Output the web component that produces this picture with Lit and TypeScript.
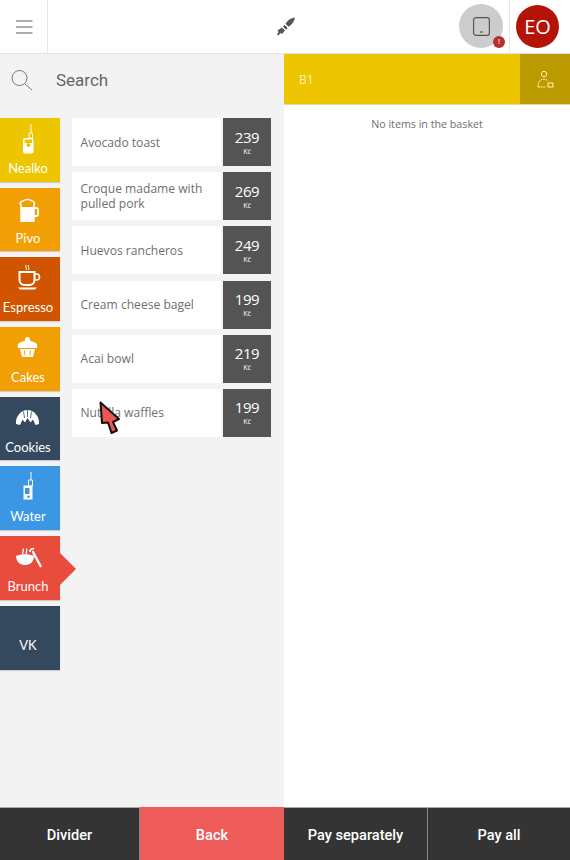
import { LitElement, html, css, svg } from "lit";
import { customElement } from "lit/decorators.js";

const drink = svg`<path d="M18 0v9" stroke="#fff" stroke-width="1"/><path d="M16 9h3.5v5H16z" stroke="#fff" stroke-width=".9"/><rect x="10.8" y="14.8" width="9" height="14" rx="1.4" stroke="#fff" stroke-width="1.5"/><rect x="11" y="19" width="8.6" height="10" fill="#fff"/><circle cx="15.5" cy="21" r="2" fill="#edc500"/>`;
const beer = svg`<path d="M8 27V11c-2-2 0-4 2-4 2-2 7-2 9 0 2 0 3 2 2 4v16z" stroke="#fff" stroke-width="1.5"/><path d="M8 13h13v15H8z" fill="#fff"/><path d="M21 14h2.5a1.5 1.5 0 0 1 1.5 1.5v5a1.5 1.5 0 0 1-1.5 1.5H21" stroke="#fff" stroke-width="1.8"/>`;
const cup = svg`<path d="M13 2c-1.500 1.500 1.500 2.500 0 5M15.500 2c-1.500 1.500 1.500 2.500 0 5" stroke="#fff" stroke-width="1"/><path d="M6.500 9h15v8a5 5 0 0 1-5 5h-5a5 5 0 0 1-5-5z" stroke="#fff" stroke-width="2"/><path d="M22 11h1.500a2.500 2.500 0 0 1 0 6H22" stroke="#fff" stroke-width="1.600"/><path d="M5 24.500h19l-2 2H7z" fill="#fff"/>`;
const cake = svg`<circle cx="14.500" cy="6.500" r="2.500" fill="#fff"/><path d="M5 15c-1.500-4 2-6 4-6 2-2 9-2 11 0 2 0 5.500 2 4 6z" fill="#fff"/><path d="M7 16h15l-2 8H9z" fill="#fff"/><path d="M11.500 17.500l.5 5M17.500 17.500l-.5 5" stroke="#f29f05"/>`;
const croissant = svg`<path d="M3 21c-.8-7 4.500-14 11.500-14S26.800 14 26 21l-3.500 1-2.500-5.500-2.500 3-3-4.500-2.500 4.500-2.500-3L7 22z" fill="#fff"/><path d="M10.500 8.500l1 6.500M14.500 7v7M18.500 8.500l-1 6.500" stroke="#34495e" stroke-width=".8"/>`;
const bottle = svg`<path d="M18 0v8" stroke="#fff"/><path d="M15.500 8h4v6h-4z" stroke="#fff" stroke-width=".9"/><path d="M10.500 13.500h9V27.500h-9z" fill="#fff"/><path d="M12 16h4.500v6H12z" fill="#3b97e3"/><circle cx="15.500" cy="24.700" r="1.300" fill="#3b97e3"/>`;
const bowl = svg`<path d="M10 12c-1.500-2 1.500-3 0-5.500M13.500 12c-1.500-2 1.500-3 0-5.500" stroke="#fff" stroke-width="1.300"/><path d="M17 10c-.5-2 2-4 4-3" stroke="#fff" stroke-width="1.800"/><path d="M3 14c5-2.500 13-2.500 18 0 0 5-3.500 9-8.500 9h-1C6.500 23 3 19 3 14z" fill="#fff"/><path d="M20 10l7.500 14" stroke="#fff" stroke-width="2.400" stroke-linecap="round"/>`;

const cats = [
  { n: "Nealko", c: "#edc500", i: drink },
  { n: "Pivo", c: "#f29f05", i: beer },
  { n: "Espresso", c: "#d15400", i: cup },
  { n: "Cakes", c: "#f29f05", i: cake },
  { n: "Cookies", c: "#34495e", i: croissant },
  { n: "Water", c: "#3b97e3", i: bottle },
  { n: "Brunch", c: "#e74c3c", i: bowl, active: true },
  { n: "VK", c: "#34495e" },
];
const items = [
  ["Avocado toast", "239"],
  ["Croque madame with pulled pork", "269"],
  ["Huevos rancheros", "249"],
  ["Cream cheese bagel", "199"],
  ["Acai bowl", "219"],
  ["Nutella waffles", "199"],
];

@customElement("app-root")
export class AppRoot extends LitElement {
  static styles = css`
    :host { display: block; width: 570px; height: 860px; font-family: Roboto, sans-serif; position: relative; overflow: hidden; background: #fff; }
    .top { height: 53px; display: flex; align-items: stretch; border-bottom: 1px solid #e4e4e4; box-sizing: content-box; }
    .burger { width: 48px; border-right: 1px solid #e6e6e6; display: flex; align-items: center; justify-content: center; padding-left: 2px; box-sizing: border-box; }
    .logo { flex: 1; display: flex; align-items: center; justify-content: center; padding-left: 62px; }
    .tablet { width: 44px; height: 44px; margin: 4px 6px 0 0; border-radius: 50%; background: #ccc; position: relative; display: flex; align-items: center; justify-content: center; }
    .dot { position: absolute; width: 12px; height: 12px; border-radius: 50%; background: #b5302f; right: -2px; bottom: 0; color: #f3c6c6; font: 700 7px/12px "Open Sans", sans-serif; text-align: center; }
    .user { width: 61px; border-left: 1px solid #e6e6e6; display: flex; padding: 5px 0 0 6px; box-sizing: border-box; }
    .avatar { width: 43px; height: 43px; border-radius: 50%; background: #b41408; color: #fff; font: 400 20px "Open Sans", sans-serif; display: flex; align-items: center; justify-content: center; }
    .main { display: flex; height: 753px; }
    .left { width: 284px; background: #f3f3f3; flex: none; }
    .search { height: 52px; padding: 0 0 12px 11px; display: flex; align-items: center; gap: 23px; }
    .search svg { margin-top: -1px; }
    .search span { font-size: 17px; color: #666; }
    .cols { display: flex; gap: 12px; }
    .cats { width: 60px; display: flex; flex-direction: column; gap: 6px; }
    .cat { height: 63.7px; width: 60px; color: #fff; position: relative; font: 400 13px Lato, sans-serif; box-shadow: 0 1px 1px rgba(0,0,0,.15); }
    .cat svg { position: absolute; left: 13px; top: 6px; width: 30px; height: 30px; overflow: visible; }
    .cat .lbl { position: absolute; top: 42px; left: 0; width: 56px; text-align: center; }
    .cat.vk .lbl { top: 31px; }
    .arrow { position: absolute; left: 60px; top: 17px; width: 0; height: 0; border-left: 16px solid #e74c3c; border-top: 16px solid transparent; border-bottom: 16px solid transparent; }
    .items { width: 199px; display: flex; flex-direction: column; gap: 6.2px; }
    .item { height: 48px; display: flex; gap: 2px; }
    .name { width: 149px; background: #fff; box-sizing: border-box; padding: 0 8px 0 8.5px; display: flex; align-items: center; font: 400 12.1px/15px "Open Sans", sans-serif; color: #6f6f6f; }
    .price { width: 48px; background: #545454; color: #fff; display: flex; flex-direction: column; align-items: center; justify-content: center; font: 500 15px/17px "Open Sans", sans-serif; letter-spacing: -.4px; }
    .price small { font-size: 7px; line-height: 9px; font-weight: 400; margin-top: 1px; letter-spacing: 0; }
    .right { flex: 1; }
    .bar { height: 50px; background: #edc500; display: flex; justify-content: space-between; border-bottom: 1px solid #ead98a; }
    .bar .b1 { color: #fff3b0; font: 400 12px "Open Sans", sans-serif; padding: 0 0 0 15px; align-self: center; }
    .bar .who { width: 50px; background: #bb9a00; display: flex; align-items: center; justify-content: center; }
    .empty { text-align: center; font: 400 10.7px "Open Sans", sans-serif; color: #6f6f6f; margin-top: 12px; }
    .foot { display: grid; grid-template-columns: 140px 144px 144px 142px; height: 53px; }
    .foot div { background: #343434; color: #fff; display: flex; align-items: center; justify-content: center; padding-top: 2px; font: 500 14.6px Roboto, sans-serif; border-top: 1px solid #aaa; box-sizing: border-box; border-right: 1px solid #8a8a8a; }
    .foot div:last-child { border-right: 0; }
    .foot .back { background: #ee5c5a; border-top-color: #ee5c5a; border-right: 0; }
    .cursor { position: absolute; left: 98px; top: 400px; }
  `;

  render() {
    return html`
      <div class="top">
        <div class="burger">
          <svg width="17" height="14" viewBox="0 0 17 14"><path d="M0 1h16.500M0 7h16.500M0 13h16.500" stroke="#5c5c5c" stroke-width="1.100"/></svg>
        </div>
        <div class="logo">
          <svg width="22" height="22" viewBox="0 0 22 22"><path d="M21 1.500c-3 .2-6 1.800-8 4.200l-1.500 2 3 3 2-1.500c2.500-2 4.200-5 4.500-7.700z" fill="#555"/><path d="M10.500 9l3 3-1.500 1.500-3-3z" fill="#444"/><path d="M8 11.500l3 3-3 3.500-1.500-1-2 2.500-1.500-1 1.500-2.500-1-1.500z" fill="#555"/></svg>
        </div>
        <div class="tablet">
          <svg width="17" height="19" viewBox="0 0 17 19"><rect x=".6" y=".6" width="15.800" height="17.800" rx="2.500" fill="none" stroke="#555" stroke-width="1.200"/><path d="M7 15h3" stroke="#555" stroke-width="1.200"/></svg>
          <span class="dot">!</span>
        </div>
        <div class="user"><div class="avatar">EO</div></div>
      </div>
      <div class="main">
        <div class="left">
          <div class="search">
            <svg width="22" height="22" viewBox="0 0 22 22"><circle cx="8.500" cy="9" r="7.500" fill="none" stroke="#777" stroke-width="1"/><path d="M14 15l7 6" stroke="#777"/></svg>
            <span>Search</span>
          </div>
          <div class="cols">
            <div class="cats">
              ${cats.map((c) => html`
                <div class="cat ${c.i ? "" : "vk"}" style="background:${c.c}">
                  ${c.i ? html`<svg viewBox="0 0 30 30" fill="none">${c.i}</svg>` : ""}
                  <span class="lbl">${c.n}</span>
                  ${c.active ? html`<span class="arrow"></span>` : ""}
                </div>`)}
            </div>
            <div class="items">
              ${items.map(([n, p]) => html`
                <div class="item">
                  <div class="name">${n}</div>
                  <div class="price">${p}<small>Kč</small></div>
                </div>`)}
            </div>
          </div>
        </div>
        <div class="right">
          <div class="bar">
            <span class="b1">B1</span>
            <div class="who">
              <svg width="18" height="18" viewBox="0 0 18 18" fill="none" stroke="#fff3b0" stroke-width="1"><circle cx="8" cy="4" r="2.700"/><path d="M2 17c0-5 2-8 6-8 1.500 0 2.500.6 3.500 1.600" stroke-dasharray="2 .6"/><path d="M2 17h8" stroke-dasharray="2 .6"/><rect x="12" y="13" width="5" height="4"/></svg>
            </div>
          </div>
          <div class="empty">No items in the basket</div>
        </div>
      </div>
      <div class="foot">
        <div>Divider</div>
        <div class="back">Back</div>
        <div>Pay separately</div>
        <div>Pay all</div>
      </div>
      <svg class="cursor" width="24" height="36" viewBox="0 0 24 36"><path d="M2.500 2.500L21 19l-6 3 4 8.500-5.500 2.500-3.500-10.500-6 0.500z" fill="#ee5555" stroke="#111" stroke-width="2" stroke-linejoin="round"/></svg>
    `;
  }
}
